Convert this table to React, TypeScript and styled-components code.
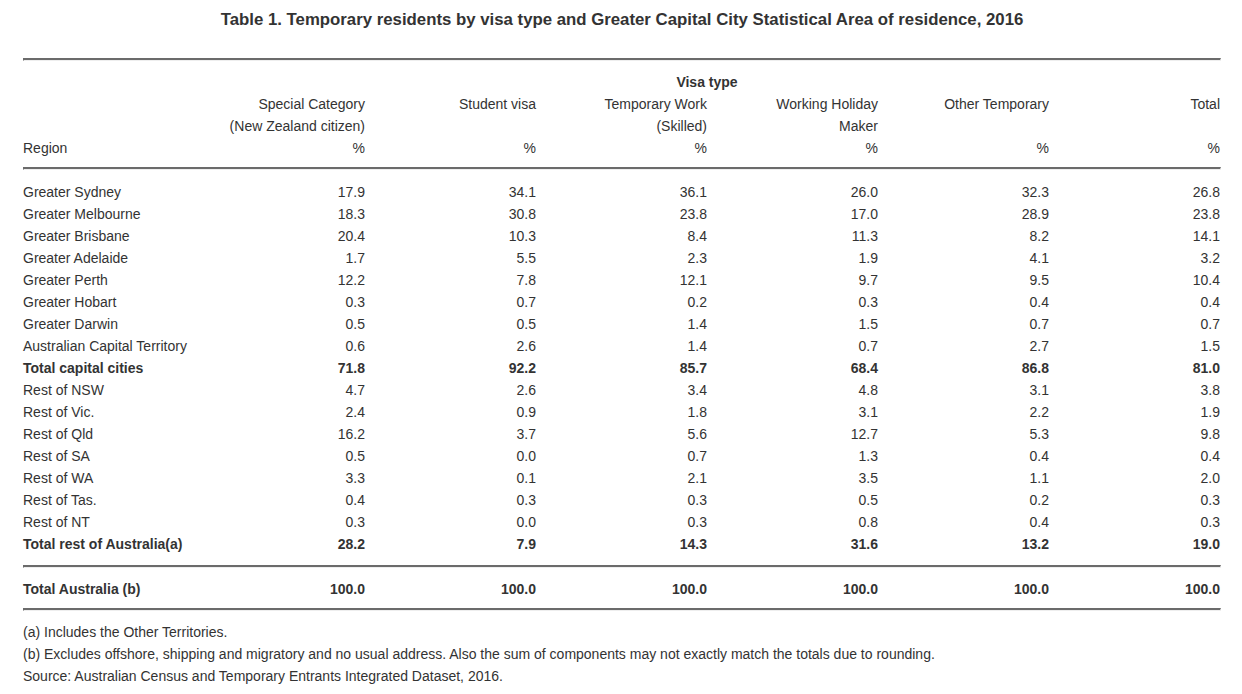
import React from 'react';
import styled, { createGlobalStyle } from 'styled-components';

const GlobalStyle = createGlobalStyle`
  html, body {
    margin: 0;
    padding: 0;
    background: #fff;
  }
  body {
    font-family: "Liberation Sans", Arial, sans-serif;
    font-size: 14px;
    color: #333;
  }
`;

type Row = { region: string; values: string[]; bold?: boolean };

const capitalRows: Row[] = [
  { region: 'Greater Sydney', values: ['17.9', '34.1', '36.1', '26.0', '32.3', '26.8'] },
  { region: 'Greater Melbourne', values: ['18.3', '30.8', '23.8', '17.0', '28.9', '23.8'] },
  { region: 'Greater Brisbane', values: ['20.4', '10.3', '8.4', '11.3', '8.2', '14.1'] },
  { region: 'Greater Adelaide', values: ['1.7', '5.5', '2.3', '1.9', '4.1', '3.2'] },
  { region: 'Greater Perth', values: ['12.2', '7.8', '12.1', '9.7', '9.5', '10.4'] },
  { region: 'Greater Hobart', values: ['0.3', '0.7', '0.2', '0.3', '0.4', '0.4'] },
  { region: 'Greater Darwin', values: ['0.5', '0.5', '1.4', '1.5', '0.7', '0.7'] },
  { region: 'Australian Capital Territory', values: ['0.6', '2.6', '1.4', '0.7', '2.7', '1.5'] },
  { region: 'Total capital cities', values: ['71.8', '92.2', '85.7', '68.4', '86.8', '81.0'], bold: true },
  { region: 'Rest of NSW', values: ['4.7', '2.6', '3.4', '4.8', '3.1', '3.8'] },
  { region: 'Rest of Vic.', values: ['2.4', '0.9', '1.8', '3.1', '2.2', '1.9'] },
  { region: 'Rest of Qld', values: ['16.2', '3.7', '5.6', '12.7', '5.3', '9.8'] },
  { region: 'Rest of SA', values: ['0.5', '0.0', '0.7', '1.3', '0.4', '0.4'] },
  { region: 'Rest of WA', values: ['3.3', '0.1', '2.1', '3.5', '1.1', '2.0'] },
  { region: 'Rest of Tas.', values: ['0.4', '0.3', '0.3', '0.5', '0.2', '0.3'] },
  { region: 'Rest of NT', values: ['0.3', '0.0', '0.3', '0.8', '0.4', '0.3'] },
  { region: 'Total rest of Australia(a)', values: ['28.2', '7.9', '14.3', '31.6', '13.2', '19.0'], bold: true },
];

const totalRow: Row = {
  region: 'Total Australia (b)',
  values: ['100.0', '100.0', '100.0', '100.0', '100.0', '100.0'],
  bold: true,
};

const headings: [string, string][] = [
  ['Special Category', '(New Zealand citizen)'],
  ['Student visa', ''],
  ['Temporary Work', '(Skilled)'],
  ['Working Holiday', 'Maker'],
  ['Other Temporary', ''],
  ['Total', ''],
];

const footnotes = [
  '(a) Includes the Other Territories.',
  '(b) Excludes offshore, shipping and migratory and no usual address. Also the sum of components may not exactly match the totals due to rounding.',
  'Source: Australian Census and Temporary Entrants Integrated Dataset, 2016.',
];

const Columns = () => (
  <colgroup>
    {Array.from({ length: 7 }).map((_, i) => (
      <col key={i} style={{ width: 171 }} />
    ))}
  </colgroup>
);

const App = () => {
  return (
    <Page>
      <GlobalStyle />
      <Title>
        Table 1. Temporary residents by visa type and Greater Capital City Statistical Area of residence, 2016
      </Title>

      <Rule $top={28} $bottom={10} />

      <Table>
        <Columns />
        <thead>
          <tr>
            <Cell />
            <GroupHead colSpan={6}>Visa type</GroupHead>
          </tr>
          <tr>
            <Cell />
            {headings.map(([a]) => (
              <Cell key={a} $num>{a}</Cell>
            ))}
          </tr>
          <tr>
            <Cell />
            {headings.map(([a, b]) => (
              <Cell key={a} $num>{b}</Cell>
            ))}
          </tr>
          <tr>
            <Cell>Region</Cell>
            {headings.map(([a]) => (
              <Cell key={a} $num>%</Cell>
            ))}
          </tr>
        </thead>
      </Table>

      <Rule $top={8} $bottom={11} />

      <Table>
        <Columns />
        <tbody>
          {capitalRows.map(row => (
            <tr key={row.region}>
              <Cell $bold={row.bold}>{row.region}</Cell>
              {row.values.map((v, i) => (
                <Cell key={i} $num $bold={row.bold}>{v}</Cell>
              ))}
            </tr>
          ))}
        </tbody>
      </Table>

      <Rule $top={10} $bottom={10} />

      <Table>
        <Columns />
        <tbody>
          <tr>
            <Cell $bold>{totalRow.region}</Cell>
            {totalRow.values.map((v, i) => (
              <Cell key={i} $num $bold>{v}</Cell>
            ))}
          </tr>
        </tbody>
      </Table>

      <Rule $top={8} $bottom={10} />

      <Notes>
        {footnotes.map(n => (
          <Note key={n}>{n}</Note>
        ))}
      </Notes>
    </Page>
  );
};

const Page = styled.div`
  width: 1198px;
  padding: 10px 21px 10px 23px;
  font-family: "Liberation Sans", Arial, sans-serif;
  font-size: 14px;
  color: #333;
`;

const Title = styled.h1`
  margin: 0;
  font-size: 16.8px;
  line-height: 20px;
  font-weight: bold;
  text-align: center;
  color: #333;
`;

const Rule = styled.div<{ $top: number; $bottom: number }>`
  height: 0;
  margin: ${p => p.$top}px 0 ${p => p.$bottom}px;
  border-style: solid;
  border-width: 2px 1px 1px 1px;
  border-color: #6b6b6b #eeeeee #eeeeee #6b6b6b;
`;

const Table = styled.table`
  width: 1197px;
  table-layout: fixed;
  border-collapse: collapse;
`;

const Cell = styled.td<{ $num?: boolean; $bold?: boolean }>`
  padding: 0;
  height: 22px;
  line-height: 22px;
  white-space: nowrap;
  font-size: 14px;
  text-align: ${p => (p.$num ? 'right' : 'left')};
  font-weight: ${p => (p.$bold ? 'bold' : 'normal')};
  color: #333;
`;

const GroupHead = styled.td`
  padding: 0;
  height: 22px;
  line-height: 22px;
  font-size: 14px;
  text-align: center;
  font-weight: bold;
  color: #333;
`;

const Notes = styled.div`
  display: flex;
  flex-direction: column;
`;

const Note = styled.div`
  line-height: 22px;
  font-size: 14px;
`;

export default App;
